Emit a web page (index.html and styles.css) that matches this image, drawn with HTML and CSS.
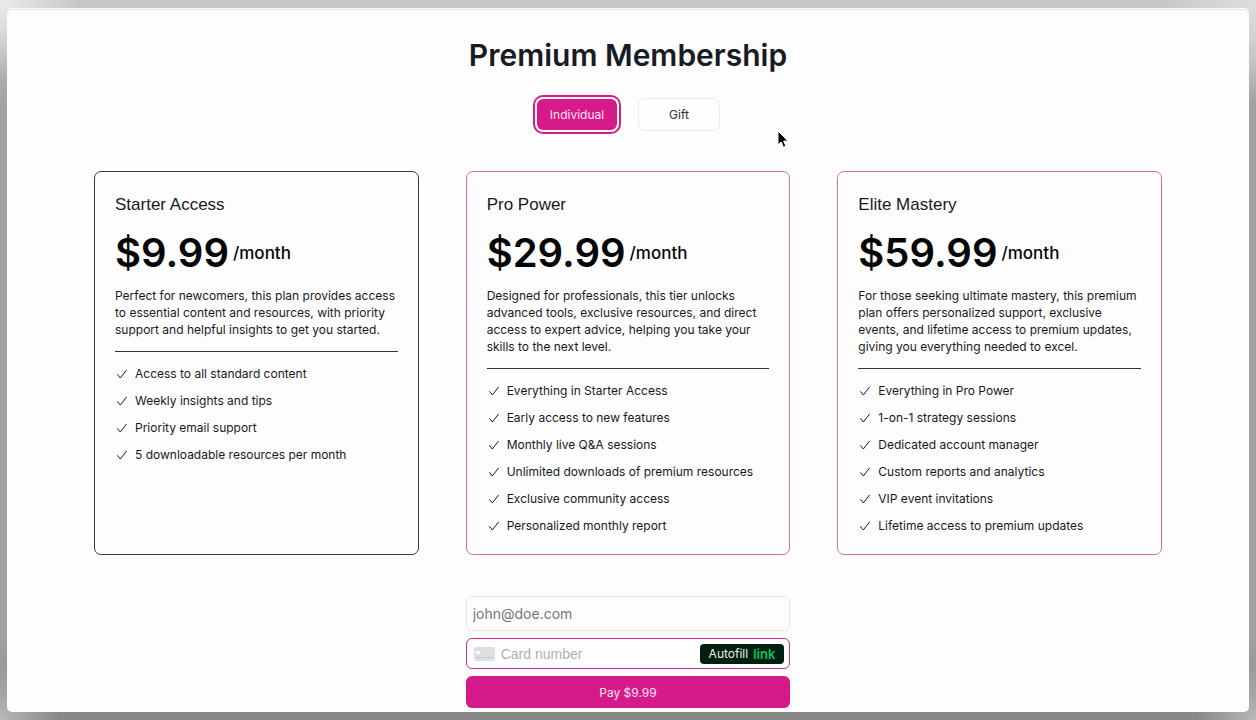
FILE: index.html
```html
<!DOCTYPE html>
<html lang="en">
<head>
<meta charset="utf-8">
<meta name="viewport" content="width=device-width, initial-scale=1">
<title>Premium Membership</title>
<link rel="stylesheet" href="styles.css">
</head>
<body>
<svg class="sprite" aria-hidden="true">
  <symbol id="check" viewBox="0 0 14 14"><path d="M2.6 7.6 5.3 11 11.4 3.2" fill="none" stroke="currentColor" stroke-linecap="round" stroke-linejoin="round"/></symbol>
</svg>
<main class="window">
  <h1 class="title">Premium Membership</h1>
  <div class="toggle">
    <button class="toggle-button toggle-active" type="button" aria-pressed="true">Individual</button>
    <button class="toggle-button" type="button" aria-pressed="false">Gift</button>
  </div>
  <div class="plans">
    <section class="plan plan-selected">
      <h2 class="plan-name">Starter Access</h2>
      <p class="price"><span class="amount">$9.99</span><span class="period">/month</span></p>
      <p class="description">Perfect for newcomers, this plan provides access to essential content and resources, with priority support and helpful insights to get you started.</p>
      <ul class="features">
        <li class="feature"><svg class="check"><use href="#check"/></svg>Access to all standard content</li>
        <li class="feature"><svg class="check"><use href="#check"/></svg>Weekly insights and tips</li>
        <li class="feature"><svg class="check"><use href="#check"/></svg>Priority email support</li>
        <li class="feature"><svg class="check"><use href="#check"/></svg>5 downloadable resources per month</li>
      </ul>
    </section>
    <section class="plan">
      <h2 class="plan-name">Pro Power</h2>
      <p class="price"><span class="amount">$29.99</span><span class="period">/month</span></p>
      <p class="description">Designed for professionals, this tier unlocks advanced tools, exclusive resources, and direct access to expert advice, helping you take your skills to the next level.</p>
      <ul class="features">
        <li class="feature"><svg class="check"><use href="#check"/></svg>Everything in Starter Access</li>
        <li class="feature"><svg class="check"><use href="#check"/></svg>Early access to new features</li>
        <li class="feature"><svg class="check"><use href="#check"/></svg>Monthly live Q&amp;A sessions</li>
        <li class="feature"><svg class="check"><use href="#check"/></svg>Unlimited downloads of premium resources</li>
        <li class="feature"><svg class="check"><use href="#check"/></svg>Exclusive community access</li>
        <li class="feature"><svg class="check"><use href="#check"/></svg>Personalized monthly report</li>
      </ul>
    </section>
    <section class="plan">
      <h2 class="plan-name">Elite Mastery</h2>
      <p class="price"><span class="amount">$59.99</span><span class="period">/month</span></p>
      <p class="description">For those seeking ultimate mastery, this premium plan offers personalized support, exclusive events, and lifetime access to premium updates, giving you everything needed to excel.</p>
      <ul class="features">
        <li class="feature"><svg class="check"><use href="#check"/></svg>Everything in Pro Power</li>
        <li class="feature"><svg class="check"><use href="#check"/></svg>1-on-1 strategy sessions</li>
        <li class="feature"><svg class="check"><use href="#check"/></svg>Dedicated account manager</li>
        <li class="feature"><svg class="check"><use href="#check"/></svg>Custom reports and analytics</li>
        <li class="feature"><svg class="check"><use href="#check"/></svg>VIP event invitations</li>
        <li class="feature"><svg class="check"><use href="#check"/></svg>Lifetime access to premium updates</li>
      </ul>
    </section>
    <form class="checkout">
      <input class="email" type="email" placeholder="john@doe.com" aria-label="Email">
      <div class="card-field">
        <svg class="card-icon" viewBox="0 0 21 14" aria-hidden="true"><rect width="21" height="14" rx="2" fill="#dedfe0"/><rect x="2" y="4" width="4" height="3" rx="1" fill="#fff"/><path d="M2 10.5h4m1 0h4m1 0h3m1 0h3" stroke="#c3c5c6"/></svg>
        <input class="card-input" type="text" inputmode="numeric" placeholder="Card number" aria-label="Card number">
        <button class="autofill" type="button">Autofill <span class="link-brand">link</span></button>
      </div>
      <button class="pay" type="submit">Pay $9.99</button>
    </form>
  </div>
</main>
<svg class="pointer" viewBox="0 0 12 20" aria-hidden="true"><path d="M1 1v14l3.2-3 2.2 5.2 2.5-1-2.2-5.1H11z" fill="#000" stroke="#fff"/></svg>
</body>
</html>
```
FILE: styles.css
```css
* { box-sizing: border-box; }
body {
  margin: 0;
  min-height: 100vh;
  padding: 8px 7px;
  display: flex;
  font-family: Inter, "Liberation Sans", sans-serif;
  color: #18191c;
  background:
    radial-gradient(circle at 0 0, #ececec 0, transparent 80px),
    radial-gradient(circle at 100% 0, #dedede 0, transparent 100px),
    radial-gradient(circle at 0 100%, #b8b8b8 0, transparent 60px),
    radial-gradient(circle at 100% 100%, #b8b8b8 0, transparent 60px),
    linear-gradient(#c8c8c8 0, #a0a0a0 110px, #a0a0a0 640px, #888 712px);
}
button, input { font: inherit; }
h1, h2, p, ul { margin: 0; padding: 0; font-weight: 400; }
.sprite { position: absolute; width: 0; height: 0; }
.window {
  flex: 1;
  padding: 27px 87px 4px;
  background: #fdfdfd;
  border-radius: 5px;
  box-shadow: inset 0 1px #fff, inset 0 2px #e3e3e3;
}
.title {
  font-size: 30px;
  line-height: 40px;
  font-weight: 600;
  text-align: center;
  color: #181b24;
}
.toggle {
  display: flex;
  justify-content: center;
  gap: 20px;
  margin-top: 23px;
}
.toggle-button {
  height: 33px;
  width: 82px;
  padding: 0;
  border: 1px solid #ebebeb;
  border-radius: 7px;
  background: #fdfdfd;
  color: #333;
  font-size: 12px;
}
.toggle-active {
  border-color: #fff;
  background: #d61a89;
  background-clip: padding-box;
  color: #fde3f2;
  box-shadow: 0 0 0 1px #fff, 0 0 0 3px #d61a89;
}
.plans {
  display: grid;
  grid-template-columns: repeat(3, minmax(0, 1fr));
  column-gap: 47px;
  row-gap: 41px;
  margin-top: 40px;
}
.plan {
  padding: 20px;
  border: 1px solid #d76bb0;
  border-radius: 7px;
}
.plan-selected { border-color: #3a3a3a; }
.plan-name {
  font-family: "Liberation Sans", sans-serif;
  font-size: 17px;
  line-height: 26px;
}
.price {
  display: flex;
  align-items: center;
  gap: 4px;
  margin-top: 10px;
  line-height: 50px;
  color: #050506;
}
.amount { font-size: 40px; font-weight: 600; }
.period { font-size: 17px; font-weight: 500; }
.description {
  margin-top: 9px;
  padding-bottom: 13px;
  border-bottom: 1px solid #333;
  font-size: 12px;
  line-height: 17px;
}
.features {
  display: grid;
  gap: 10px;
  margin-top: 13px;
  list-style: none;
}
.feature {
  display: flex;
  align-items: center;
  gap: 6px;
  font-size: 12px;
  line-height: 17px;
}
.check { width: 14px; height: 14px; }
.checkout {
  grid-column: 2;
  display: flex;
  flex-direction: column;
  gap: 7px;
}
.email {
  height: 35px;
  padding: 0 6px;
  border: 1px solid #e8e8e8;
  border-radius: 6px;
  background: #fdfdfd;
  font-size: 14px;
}
.email::placeholder { color: #777; }
.card-field {
  display: flex;
  align-items: center;
  height: 31px;
  padding: 0 5px 0 7px;
  border: 1px solid #c8308d;
  border-radius: 6px;
}
.card-icon { flex: none; width: 21px; height: 14px; }
.card-input {
  flex: 1;
  min-width: 0;
  padding: 0 6px;
  border: 0;
  background: none;
  font-family: "Liberation Sans", sans-serif;
  font-size: 14px;
}
.card-input::placeholder { color: #adb3b3; }
.autofill {
  display: flex;
  align-items: center;
  gap: 5px;
  height: 20px;
  padding: 0 9px;
  border: 0;
  border-radius: 4px;
  background: #011e0f;
  color: #e9efec;
  font-size: 12px;
  line-height: 20px;
}
.link-brand { color: #00c463; font-size: 13px; font-weight: 600; }
.pay {
  height: 32px;
  border: 0;
  border-radius: 6px;
  background: #d61a89;
  color: #fde3f2;
  font-size: 12px;
}
.pointer {
  position: absolute;
  left: 777px;
  top: 130px;
  width: 12px;
  height: 20px;
}
```
